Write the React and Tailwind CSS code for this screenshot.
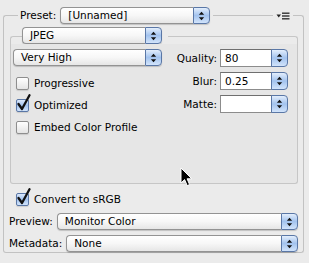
import React from 'react'

// Tiny aqua up/down arrows used in every popup and combo stepper
function Arrows() {
  return (
    <svg width="7" height="10" viewBox="0 0 7 10">
      <path d="M3.5 0.8 L6.2 3.8 L0.8 3.8 Z" fill="#111" />
      <path d="M0.8 6.2 L6.2 6.2 L3.5 9.2 Z" fill="#111" />
    </svg>
  )
}

function Stepper({ className = '' }) {
  return (
    <div
      className={`flex w-[17px] shrink-0 items-center justify-center rounded-r-[4px] border border-[#5a77a6] bg-linear-to-b from-[#e3eefc] via-[#a3c3ee] to-[#d2e4fb] ${className}`}
    >
      <Arrows />
    </div>
  )
}

function Popup({ value, className = '' }) {
  return (
    <div
      className={`flex h-[17px] shrink-0 rounded-[4px] shadow-[0_1px_1px_rgba(0,0,0,0.18)] ${className}`}
    >
      <div className="flex flex-1 items-center rounded-l-[4px] border border-r-0 border-[#939393] bg-linear-to-b from-white via-[#f7f7f7] to-[#e6e6e6] pl-[7px] leading-none">
        {value}
      </div>
      <Stepper />
    </div>
  )
}

function Combo({ value }) {
  return (
    <div className="flex h-[18px] w-[68px] shrink-0">
      <div className="flex flex-1 items-center border border-[#8c8c8c] border-t-[#6f6f6f] bg-white pl-[4px] leading-none">
        {value}
      </div>
      <Stepper className="-ml-px" />
    </div>
  )
}

function Check({ checked, label }) {
  return (
    <div className="flex items-center gap-[5px]">
      <div className="relative h-[13px] w-[13px]">
        <div
          className={`h-[13px] w-[13px] rounded-[2px] border shadow-[0_1px_1px_rgba(0,0,0,0.12)] ${
            checked
              ? 'border-[#5a77a6] bg-linear-to-b from-[#dce9fb] via-[#a3c3ee] to-[#d2e4fb]'
              : 'border-[#8e8e8e] bg-linear-to-b from-white to-[#e4e4e4]'
          }`}
        />
        {checked && (
          <svg className="absolute -top-[5px] left-[1px]" width="14" height="17" viewBox="0 0 14 17">
            <path d="M1.5 10 L5 15 L12.5 1.2" fill="none" stroke="#111" strokeWidth="2.3" strokeLinecap="round" strokeLinejoin="round" />
          </svg>
        )}
      </div>
      <span className="leading-none">{label}</span>
    </div>
  )
}

function MenuGlyph() {
  return (
    <svg width="14" height="8" viewBox="0 0 14 8">
      <path d="M0.5 2.5 L5 2.5 L2.75 5.5 Z" fill="#222" />
      <rect x="6" y="0.5" width="7.5" height="1.4" fill="#333" />
      <rect x="6" y="3.3" width="7.5" height="1.4" fill="#333" />
      <rect x="6" y="6.1" width="7.5" height="1.4" fill="#333" />
    </svg>
  )
}

function Cursor() {
  return (
    <svg className="absolute left-[180px] top-[167px]" width="13" height="20" viewBox="0 0 13 20">
      <path
        d="M1 1 L1 16 L4.6 12.6 L7.2 18.6 L9.6 17.6 L7.1 11.8 L11.8 11.8 Z"
        fill="#000"
        stroke="#fff"
        strokeWidth="1"
        strokeLinejoin="round"
      />
    </svg>
  )
}

export default function App() {
  return (
    <div className="relative h-[263px] w-[309px] bg-[#ebebeb] pl-[3px] pt-[7px] font-['DejaVu_Sans',sans-serif] text-[10.5px] text-black">
      {/* outer group header */}
      <div className="flex h-[17px] w-[301px]">
        <div className="h-[9px] w-[15px] self-end rounded-tl-[3px] border-l border-t border-[#c2c2c2]" />
        <span className="ml-[2px] mr-[4px] self-center leading-none">Preset:</span>
        <Popup value="[Unnamed]" className="w-[150px]" />
        <div className="ml-[3px] h-[9px] flex-1 self-end border-t border-[#c2c2c2]" />
        <div className="mx-[3px] self-center">
          <MenuGlyph />
        </div>
        <div className="h-[9px] w-[11px] self-end rounded-tr-[3px] border-r border-t border-[#c2c2c2]" />
      </div>

      {/* outer group body */}
      <div className="flex h-[229px] w-[301px] flex-col rounded-b-[3px] border-x border-b border-[#c2c2c2] pl-[5px]">
        {/* inner JPEG group header */}
        <div className="ml-[1px] mt-[3px] flex h-[17px] w-[288px]">
          <div className="h-[8px] w-[12px] self-end rounded-tl-[3px] border-l border-t border-[#c6c6c6]" />
          <Popup value="JPEG" className="w-[140px]" />
          <div className="ml-[6px] h-[8px] flex-1 self-end rounded-tr-[3px] border-r border-t border-[#c6c6c6]" />
        </div>
        <div className="ml-[1px] flex h-[142px] w-[288px] rounded-b-[3px] border-x border-b border-[#c6c6c6] bg-[#e6e6e6] pl-[2px] pt-[5px]">
          <div className="flex w-[149px] flex-col">
            <Popup value="Very High" className="w-[149px]" />
            <div className="ml-[3px] mt-[6px] flex flex-col">
              <div className="flex h-[22px] items-center">
                <Check label="Progressive" />
              </div>
              <div className="flex h-[22px] items-center">
                <Check checked label="Optimized" />
              </div>
              <div className="flex h-[22px] items-center">
                <Check label="Embed Color Profile" />
              </div>
            </div>
          </div>
          <div className="ml-[3px] flex flex-col gap-[5px]">
            {[
              ['Quality:', '80'],
              ['Blur:', '0.25'],
              ['Matte:', ''],
            ].map(([label, value]) => (
              <div key={label} className="flex items-center">
                <span className="w-[55px] pr-[3px] text-right leading-none">{label}</span>
                <Combo value={value} />
              </div>
            ))}
          </div>
        </div>

        <div className="ml-[7px] mt-[8px] flex h-[14px] items-center">
          <Check checked label="Convert to sRGB" />
        </div>
        <div className="mt-[7px] flex items-center">
          <span className="mr-[4px] leading-none">Preview:</span>
          <Popup value="Monitor Color" className="flex-1 mr-[5px]" />
        </div>
        <div className="mt-[5px] flex items-center">
          <span className="mr-[4px] leading-none">Metadata:</span>
          <Popup value="None" className="flex-1 mr-[5px]" />
        </div>
      </div>

      <Cursor />
    </div>
  )
}
